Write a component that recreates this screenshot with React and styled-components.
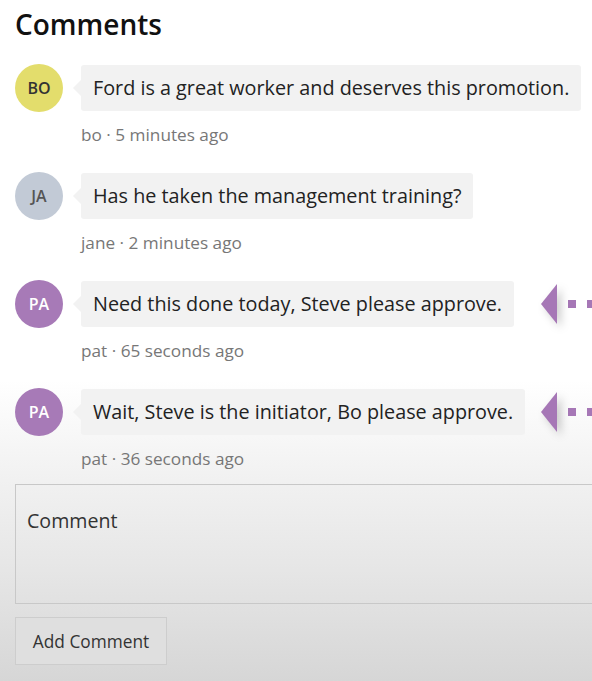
import React from 'react';
import styled, { createGlobalStyle } from 'styled-components';

const GlobalStyle = createGlobalStyle`
    html, body {
        margin: 0;
        padding: 0;
    }
    body {
        min-height: 681px;
        overflow: hidden;
        font-family: "Open Sans", "Noto Sans", Arial, sans-serif;
        background: linear-gradient(to bottom, #ffffff 0px, #ffffff 380px, #f1f1f1 480px, #e6e6e6 570px, #d6d6d6 681px);
    }
`;

const Page = styled.div`
    width: 592px;
    padding: 0 0 0 15px;
    box-sizing: border-box;
`;

const Title = styled.h2`
    margin: 0;
    padding-top: 6px;
    font-size: 28px;
    font-weight: 600;
    line-height: 36px;
    color: #111;
`;

const List = styled.div`
    display: flex;
    flex-direction: column;
    gap: 26px;
    margin-top: 22px;
`;

const Item = styled.div`
    position: relative;
    display: grid;
    grid-template-columns: 48px auto;
    column-gap: 18px;
    row-gap: 12px;
    align-items: center;
    justify-content: start;
`;

const Avatar = styled.div`
    width: 48px;
    height: 48px;
    border-radius: 50%;
    background: ${(p) => p.$bg};
    color: ${(p) => p.$fg};
    display: flex;
    align-items: center;
    justify-content: center;
    font-size: 16px;
    font-weight: 600;
`;

const Bubble = styled.div`
    position: relative;
    background: #f2f2f2;
    border-radius: 3px;
    padding: 10px 12px;
    font-size: 19.8px;
    line-height: 26px;
    color: #222;

    &::before {
        content: '';
        position: absolute;
        left: -8px;
        top: 50%;
        margin-top: -8px;
        border-top: 8px solid transparent;
        border-bottom: 8px solid transparent;
        border-right: 8px solid #f2f2f2;
    }
`;

const Meta = styled.div`
    grid-column: 2;
    font-size: 17.2px;
    line-height: 22px;
    color: #777;
`;

const Pointer = styled.div`
    position: absolute;
    left: 526px;
    top: 4px;
    display: flex;
    align-items: center;
    gap: 11px;
    height: 40px;
`;

const Arrow = styled.div`
    width: 0;
    height: 0;
    border-top: 20px solid transparent;
    border-bottom: 20px solid transparent;
    border-right: 16px solid #a677b6;
    filter: drop-shadow(4px 4px 4px rgba(0, 0, 0, 0.2));
`;

const Dot = styled.div`
    width: 8px;
    height: 8px;
    background: #a677b6;
`;

const Form = styled.div`
    margin-top: 14px;
    display: flex;
    flex-direction: column;
    gap: 13px;
`;

const CommentBox = styled.textarea`
    width: 600px;
    height: 120px;
    box-sizing: border-box;
    border: 1px solid #c8c8c8;
    background: transparent;
    padding: 22px 11px;
    font-family: inherit;
    font-size: 19.6px;
    color: #333;
    resize: none;
    outline: none;

    &::placeholder {
        color: #333;
    }
`;

const Button = styled.button`
    align-self: flex-start;
    width: 152px;
    height: 48px;
    border: 1px solid #cdcdcd;
    background: #dfdfdf;
    font-family: inherit;
    font-size: 17.3px;
    color: #333;
    padding: 0;
`;

const comments = [
    { initials: 'BO', bg: '#e3dd6c', fg: '#333', text: 'Ford is a great worker and deserves this promotion.', who: 'bo', when: '5 minutes ago' },
    { initials: 'JA', bg: '#c2cad6', fg: '#555', text: 'Has he taken the management training?', who: 'jane', when: '2 minutes ago' },
    { initials: 'PA', bg: '#a77ab7', fg: '#fff', text: 'Need this done today, Steve please approve.', who: 'pat', when: '65 seconds ago', flag: true },
    { initials: 'PA', bg: '#a77ab7', fg: '#fff', text: 'Wait, Steve is the initiator, Bo please approve.', who: 'pat', when: '36 seconds ago', flag: true },
];

export default function App() {
    return (
        <Page>
            <GlobalStyle />
            <Title>Comments</Title>
            <List>
                {comments.map((c, i) => (
                    <Item key={i}>
                        <Avatar $bg={c.bg} $fg={c.fg}>{c.initials}</Avatar>
                        <div><Bubble>{c.text}</Bubble></div>
                        <Meta>{c.who} · {c.when}</Meta>
                        {c.flag && (
                            <Pointer>
                                <Arrow />
                                <Dot />
                                <Dot />
                            </Pointer>
                        )}
                    </Item>
                ))}
            </List>
            <Form>
                <CommentBox placeholder="Comment" />
                <Button>Add Comment</Button>
            </Form>
        </Page>
    );
}
